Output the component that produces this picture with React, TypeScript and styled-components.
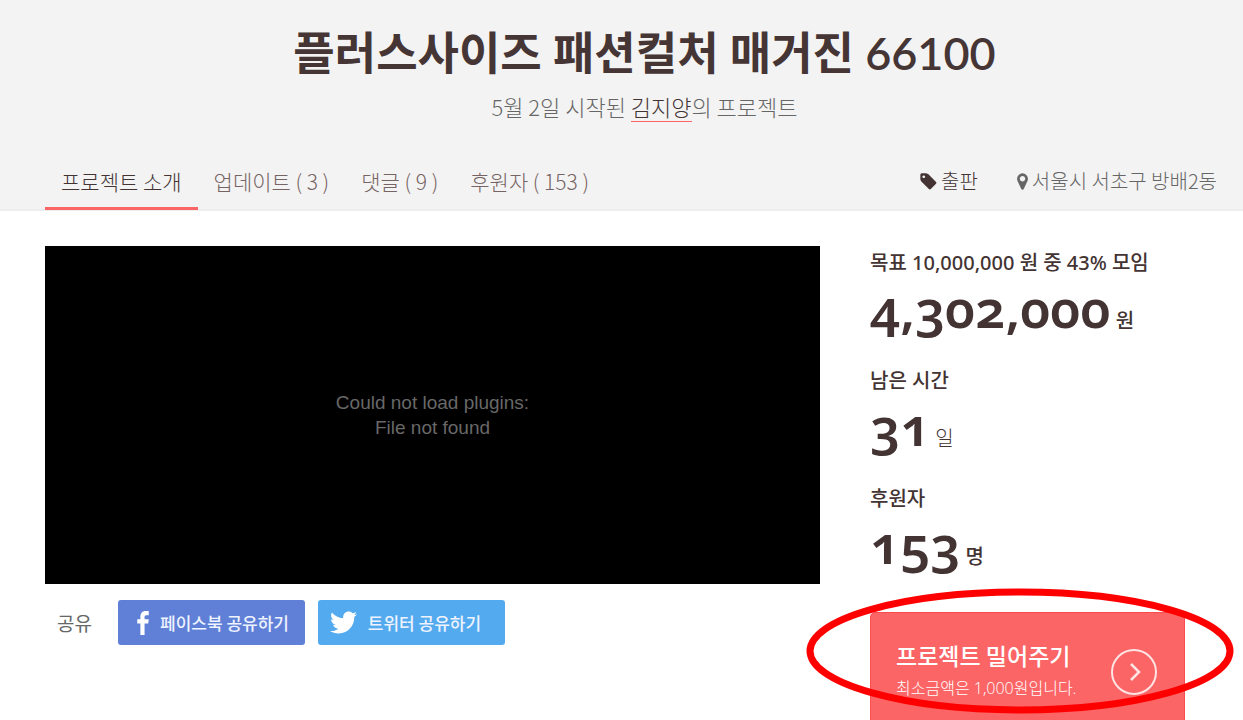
import React from 'react';
import styled, { createGlobalStyle } from 'styled-components';
import { FaTwitter } from 'react-icons/fa';

const kr = '"Noto Sans CJK KR", sans-serif';

const GlobalStyle = createGlobalStyle`
  *, *::before, *::after { box-sizing: border-box; }
  body { margin: 0; background: #fff; color: #433333; font-family: ${kr}; }
  h1, h2, p, dl, dt, dd { margin: 0; }
  a { color: inherit; text-decoration: none; }
  button { font-family: inherit; cursor: pointer; }
`;

const Page = styled.div`
  height: 100vh;
  overflow: hidden;
`;

const Header = styled.header`
  display: flex;
  flex-direction: column;
  background: #f3f3f3;
  border-bottom: 2px solid #ededed;
  padding-top: 20px;
`;

const Title = styled.h1`
  padding-left: 46px;
  text-align: center;
  font: 600 45px/66px Lato, ${kr};
  color: #453535;
`;

const Byline = styled.p`
  padding-left: 46px;
  margin-top: 4px;
  text-align: center;
  font-size: 22px;
  font-weight: 300;
  line-height: 32px;
  color: #666;
`;

const Author = styled.a`
  display: inline-block;
  line-height: 30px;
  color: #433333;
  border-bottom: 1px solid #fb6566;
`;

const NavBar = styled.div`
  display: flex;
  justify-content: space-between;
  margin: 32px 26px -1px 45px;
`;

const Tabs = styled.nav`
  display: flex;
`;

const Tab = styled.a<{ $active?: boolean }>`
  height: 56px;
  padding: 0 16px;
  font-size: 21px;
  font-weight: 300;
  line-height: 54px;
  color: ${p => (p.$active ? '#433333' : '#766363')};
  border-bottom: 3px solid ${p => (p.$active ? '#fb6566' : 'transparent')};
`;

const Meta = styled.div`
  display: flex;
  gap: 38px;
  font-size: 20px;
  font-weight: 300;
  line-height: 54px;
`;

const MetaLink = styled.a<{ $muted?: boolean }>`
  display: flex;
  align-items: center;
  height: 54px;
  gap: 3px;
  color: ${p => (p.$muted ? '#666' : '#433333')};
`;

const Icon = styled.svg`
  width: 19px;
  height: 19px;
  fill: currentColor;
`;

const PinIcon = styled(Icon)`
  width: 13px;
`;

const Main = styled.main`
  display: grid;
  grid-template-columns: minmax(0, 1fr) 315px;
  gap: 50px;
  padding: 35px 58px 0 45px;
`;

const Player = styled.div`
  display: flex;
  align-items: center;
  justify-content: center;
  height: 338px;
  background: #000;
  color: #686868;
  text-align: center;
  font: 19px/25px "Liberation Sans", Arial, sans-serif;
`;

const ShareRow = styled.div`
  display: flex;
  align-items: center;
  gap: 13px;
  padding: 16px 12px;
`;

const ShareLabel = styled.span`
  width: 48px;
  font-size: 19px;
  color: #666;
`;

const ShareButton = styled.button<{ $color: string }>`
  display: flex;
  align-items: center;
  width: 187px;
  height: 45px;
  padding: 0 16px 0 0;
  border: 0;
  border-radius: 3px;
  background: ${p => p.$color};
  color: #eef3ff;
  font-size: 17px;
  font-weight: 500;
  white-space: nowrap;
`;

const ShareIcon = styled.span`
  display: flex;
  justify-content: center;
  flex: none;
  width: 42px;
  padding-left: 8px;
  color: #fff;
`;

const ShareText = styled.span`
  flex: 1;
  text-align: center;
`;

const FacebookMark = styled.svg`
  width: 12px;
  height: 24px;
  fill: currentColor;
`;

const Stats = styled.dl`
  display: flex;
  flex-direction: column;
  padding-top: 1px;
`;

const Stat = styled.div`
  height: 118px;
`;

const StatLabel = styled.dt`
  font: 500 20px/32px "Noto Sans", ${kr};
`;

const StatValue = styled.dd`
  font: 600 53px/58px "Noto Sans", ${kr};
  font-variant-numeric: oldstyle-nums;
  white-space: nowrap;
`;

const Unit = styled.span<{ $light?: boolean }>`
  margin-left: 5px;
  font: ${p => (p.$light ? 300 : 500)} 20px ${kr};
`;

const PledgeArea = styled.div`
  position: relative;
  margin-top: 11px;
`;

const PledgeButton = styled.button`
  display: flex;
  align-items: center;
  justify-content: space-between;
  width: 100%;
  height: 120px;
  padding: 0 27px 0 25px;
  border: 1px solid #fa4b4e;
  border-radius: 5px;
  background: #fb6566;
  color: #fff;
  text-align: left;
`;

const PledgeText = styled.span`
  padding-bottom: 3px;
`;

const PledgeTitle = styled.strong`
  display: block;
  font-size: 23px;
  font-weight: 500;
  line-height: 34px;
`;

const PledgeNote = styled.span`
  display: block;
  font: 300 16px/32px "Open Sans", ${kr};
`;

const Arrow = styled.svg`
  width: 46px;
  height: 46px;
  fill: none;
  stroke: #ffe4e4;
`;

const Marker = styled.svg`
  position: absolute;
  top: -24px;
  left: -64px;
  width: 428px;
  height: 126px;
  fill: none;
  stroke: #f00;
  stroke-width: 7px;
  pointer-events: none;
`;

export default function App() {
  return (
    <Page>
      <GlobalStyle />
      <Header>
        <Title>플러스사이즈 패션컬처 매거진 66100</Title>
        <Byline>
          5월 2일 시작된 <Author href="#creator">김지양</Author>의 프로젝트
        </Byline>
        <NavBar>
          <Tabs>
            <Tab href="#intro" $active>프로젝트 소개</Tab>
            <Tab href="#updates">업데이트 ( 3 )</Tab>
            <Tab href="#comments">댓글 ( 9 )</Tab>
            <Tab href="#backers">후원자 ( 153 )</Tab>
          </Tabs>
          <Meta>
            <MetaLink href="#category">
              <Icon viewBox="0 0 1792 1792" aria-hidden="true">
                <path d="M576 448q0-53-37.500-90.500t-90.500-37.500-90.500 37.500-37.500 90.500 37.500 90.500 90.500 37.500 90.500-37.500 37.500-90.500zm1067 576q0 53-37 90l-491 492q-39 37-91 37-53 0-90-37l-715-716q-38-37-64.500-101t-26.500-117v-416q0-52 38-90t90-38h416q53 0 117 26.500t102 64.500l715 714q37 39 37 91z" />
              </Icon>
              출판
            </MetaLink>
            <MetaLink href="#location" $muted>
              <PinIcon viewBox="320 0 1152 1792" aria-hidden="true">
                <path d="M1152 640q0-106-75-181t-181-75-181 75-75 181 75 181 181 75 181-75 75-181zm256 0q0 109-33 179l-364 774q-16 33-47.500 52t-67.500 19-67.500-19-46.500-52l-365-774q-33-70-33-179 0-212 150-362t362-150 362 150 150 362z" />
              </PinIcon>
              서울시 서초구 방배2동
            </MetaLink>
          </Meta>
        </NavBar>
      </Header>
      <Main>
        <section>
          <Player>
            <p>Could not load plugins:<br />File not found</p>
          </Player>
          <ShareRow>
            <ShareLabel>공유</ShareLabel>
            <ShareButton $color="#5f80d6">
              <ShareIcon>
                <FacebookMark viewBox="0 0 11 23" aria-hidden="true">
                  <path d="M3 23V12H0V8h3V5.500C3 2 5 0 8 0h3v4H9C7.500 4 7 4.500 7 6v2h4l-.5 4H7v11z" />
                </FacebookMark>
              </ShareIcon>
              <ShareText>페이스북 공유하기</ShareText>
            </ShareButton>
            <ShareButton $color="#54aaee">
              <ShareIcon><FaTwitter size={27} /></ShareIcon>
              <ShareText>트위터 공유하기</ShareText>
            </ShareButton>
          </ShareRow>
        </section>
        <aside>
          <Stats>
            <Stat>
              <StatLabel>목표 10,000,000 원 중 43% 모임</StatLabel>
              <StatValue>4,302,000<Unit>원</Unit></StatValue>
            </Stat>
            <Stat>
              <StatLabel>남은 시간</StatLabel>
              <StatValue>31<Unit $light>일</Unit></StatValue>
            </Stat>
            <Stat>
              <StatLabel>후원자</StatLabel>
              <StatValue>153<Unit>명</Unit></StatValue>
            </Stat>
          </Stats>
          <PledgeArea>
            <PledgeButton>
              <PledgeText>
                <PledgeTitle>프로젝트 밀어주기</PledgeTitle>
                <PledgeNote>최소금액은 1,000원입니다.</PledgeNote>
              </PledgeText>
              <Arrow viewBox="0 0 46 46" aria-hidden="true">
                <circle cx="23" cy="23" r="22" strokeWidth="2" />
                <path d="M20 15l8 8-8 8" strokeWidth="2.500" />
              </Arrow>
            </PledgeButton>
            <Marker viewBox="0 0 428 126" aria-hidden="true">
              <ellipse cx="214" cy="63" rx="210" ry="59" />
            </Marker>
          </PledgeArea>
        </aside>
      </Main>
    </Page>
  );
}
